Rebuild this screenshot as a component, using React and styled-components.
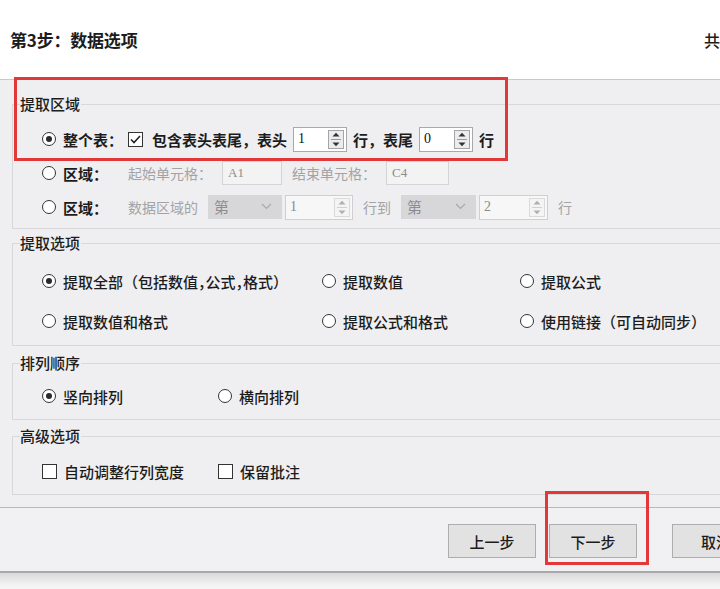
import React from "react";
import styled, { createGlobalStyle } from "styled-components";

const GlobalStyle = createGlobalStyle`
  html, body {
    margin: 0;
    padding: 0;
    background: #fff;
  }
  body {
    font-family: "Noto Sans CJK SC", "Noto Sans", sans-serif;
    font-weight: 500;
    color: #1c1c1c;
  }
`;

const Viewport = styled.div`
  position: relative;
  width: 720px;
  height: 589px;
  overflow: hidden;
  background: #f6f6f6;
`;

const Dialog = styled.div`
  width: 780px;
`;

const Header = styled.div`
  height: 79px;
  background: #fff;
  border-bottom: 1px solid #c9c9cb;
  display: flex;
  align-items: center;
  justify-content: space-between;
  padding: 0 35px 0 10px;
`;

const Title = styled.div`
  font-size: 17px;
  font-weight: 700;
  letter-spacing: -0.2px;
`;

const StepCount = styled.div`
  font-size: 16px;
`;

const Body = styled.div`
  background: #efeff1;
  padding: 14px 12px 12px 12px;
`;

const Group = styled.fieldset`
  margin: ${(p) => p.$mt || 0}px 0 0 0;
  padding: ${(p) => p.$pt}px 0 ${(p) => p.$pb}px 7px;
  border: 1px solid #d8d8da;
  min-width: 0;
`;

const Legend = styled.legend`
  padding: 0 1px 0 0;
  margin: 0;
  font-size: 15px;
  line-height: 20px;
  color: #1c1c1c;
`;

const Content = styled.div`
  padding-left: 22px;
`;

const Row = styled.div`
  height: ${(p) => p.$h || 34}px;
  display: flex;
  align-items: center;
  gap: ${(p) => p.$gap ?? 10}px;
  white-space: nowrap;
`;

const Lead = styled.div`
  display: flex;
  align-items: center;
  gap: 7px;
`;

const LeadLabel = styled.span`
  width: ${(p) => p.$w}px;
  font-size: 15px;
  font-weight: 700;
`;

const Text = styled.span`
  font-size: ${(p) => (p.$muted ? 14 : 15)}px;
  font-weight: ${(p) => (p.$bold ? 700 : 400)};
  color: ${(p) => (p.$muted ? "#a3a3a5" : "#1c1c1c")};
`;

const Punct = styled.span`
  font-feature-settings: "halt";
`;

const Radio = styled.span`
  width: 14px;
  height: 14px;
  box-sizing: border-box;
  border-radius: 50%;
  border: 1.5px solid #333;
  background: #fff;
  display: inline-flex;
  align-items: center;
  justify-content: center;
  flex: none;
  &::after {
    content: "";
    width: 6px;
    height: 6px;
    border-radius: 50%;
    background: #2a2a2a;
    display: ${(p) => (p.$on ? "block" : "none")};
  }
`;

const Box = styled.span`
  width: 15px;
  height: 15px;
  box-sizing: border-box;
  border: 1.5px solid #333;
  background: #fff;
  display: inline-flex;
  align-items: center;
  justify-content: center;
  flex: none;
  margin-right: ${(p) => p.$mr || 0}px;
`;

const Choice = styled.div`
  display: flex;
  align-items: center;
  gap: 7px;
  font-size: 15px;
`;

const Grid = styled.div`
  display: grid;
  grid-template-columns: ${(p) => p.$cols};
  grid-auto-rows: ${(p) => p.$h}px;
  align-items: center;
  white-space: nowrap;
`;

const Spin = styled.div`
  width: ${(p) => p.$w}px;
  height: 25px;
  box-sizing: border-box;
  border: 1px solid ${(p) => (p.$off ? "#cfcfd1" : "#a9a9ab")};
  background: ${(p) => (p.$off ? "#f7f7f8" : "#fff")};
  display: flex;
  align-items: center;
  justify-content: space-between;
  padding: 2px 2px 2px 4px;
  font-family: "Liberation Serif", serif;
  font-weight: 400;
  font-size: 14px;
  color: ${(p) => (p.$off ? "#8a8a8a" : "#111")};
`;

const SpinBtn = styled.span`
  width: 16px;
  height: 19px;
  box-sizing: border-box;
  border: 1px solid ${(p) => (p.$off ? "#dadadc" : "#a4a4a6")};
  background: ${(p) => (p.$off ? "#f4f4f5" : "#ececee")};
  display: flex;
  flex-direction: column;
  align-items: center;
  justify-content: space-around;
`;

const SpinRule = styled.span`
  width: 10px;
  height: 1px;
  background: ${(p) => (p.$off ? "#d0d0d0" : "#999")};
`;

const Field = styled.div`
  width: ${(p) => p.$w}px;
  height: 24px;
  box-sizing: border-box;
  border: 1px solid #d4d4d6;
  background: #f3f3f4;
  display: flex;
  align-items: center;
  padding-left: 5px;
  font-family: "Liberation Serif", serif;
  font-weight: 400;
  font-size: 13px;
  color: #8d8d8d;
`;

const Select = styled.div`
  width: ${(p) => p.$w}px;
  height: 24px;
  box-sizing: border-box;
  background: #d7d7d9;
  display: flex;
  align-items: center;
  justify-content: space-between;
  padding: 0 10px 0 6px;
  font-size: 15px;
  font-weight: 400;
  color: #8d8d8f;
`;

const Combo = styled.div`
  display: flex;
  gap: 3px;
`;

const Footer = styled.div`
  border-top: 1px solid #b9b9bb;
  background: #f1f1f3;
  height: 66px;
  display: flex;
  align-items: flex-start;
  justify-content: flex-end;
  padding: 16px 20px 0 0;
  box-sizing: border-box;
  gap: 13px;
  border-bottom: 2px solid #a9a9ab;
`;

const Button = styled.div`
  width: 88px;
  height: 34px;
  box-sizing: border-box;
  border: 1px solid #adadad;
  background: #e2e2e3;
  display: flex;
  align-items: center;
  justify-content: center;
  font-size: 15px;
  margin-left: ${(p) => p.$ml || 0}px;
`;

const Shade = styled.div`
  height: 20px;
  background: linear-gradient(#d9d9db, #f3f3f4 60%, #f8f8f8);
`;

const Mark = styled.div`
  position: absolute;
  left: ${(p) => p.$x}px;
  top: ${(p) => p.$y}px;
  width: ${(p) => p.$w}px;
  height: ${(p) => p.$h}px;
  box-sizing: border-box;
  border: 3px solid #e2383a;
  pointer-events: none;
`;

const Arrows = ({ off }) => {
  const c = off ? "#b0b0b0" : "#333";
  return (
    <SpinBtn $off={off}>
      <svg width="8" height="5" viewBox="0 0 8 5">
        <path d="M0.5 4.5 L4 0.8 L7.5 4.5 Z" fill={c} />
      </svg>
      <SpinRule $off={off} />
      <svg width="8" height="5" viewBox="0 0 8 5">
        <path d="M0.5 0.5 L4 4.2 L7.5 0.5 Z" fill={c} />
      </svg>
    </SpinBtn>
  );
};

const Chevron = () => (
  <svg width="11" height="7" viewBox="0 0 11 7">
    <path d="M1 1 L5.5 5.5 L10 1" fill="none" stroke="#a9a9ab" strokeWidth="1.2" />
  </svg>
);

const Check = () => (
  <svg width="11" height="9" viewBox="0 0 11 9">
    <path d="M1 4.5 L4 7.5 L10 1" fill="none" stroke="#222" strokeWidth="1.6" />
  </svg>
);

const SpinInput = ({ w, value, off }) => (
  <Spin $w={w} $off={off}>
    <span>{value}</span>
    <Arrows off={off} />
  </Spin>
);

export default function App() {
  return (
    <Viewport>
      <GlobalStyle />
      <Dialog>
        <Header>
          <Title>第3步：数据选项</Title>
          <StepCount>共3步</StepCount>
        </Header>

        <Body>
          <Group $pt={8} $pb={4}>
            <Legend>提取区域</Legend>
            <Content>
              <Row $gap={6}>
                <Lead>
                  <Radio $on />
                  <LeadLabel $w={59}>整个表：</LeadLabel>
                </Lead>
                <Box $mr={3}>
                  <Check />
                </Box>
                <Text $bold>包含表头表尾，表头</Text>
                <SpinInput w={54} value="1" />
                <Text $bold>行，表尾</Text>
                <SpinInput w={54} value="0" />
                <Text $bold>行</Text>
              </Row>
              <Row>
                <Lead>
                  <Radio />
                  <LeadLabel $w={55}>区域：</LeadLabel>
                </Lead>
                <Text $muted>起始单元格：</Text>
                <Field $w={60}>A1</Field>
                <Text $muted>结束单元格：</Text>
                <Field $w={63}>C4</Field>
              </Row>
              <Row>
                <Lead>
                  <Radio />
                  <LeadLabel $w={55}>区域：</LeadLabel>
                </Lead>
                <Text $muted>数据区域的</Text>
                <Combo>
                  <Select $w={74}>
                    第<Chevron />
                  </Select>
                  <SpinInput w={68} value="1" off />
                </Combo>
                <Text $muted>行到</Text>
                <Combo>
                  <Select $w={75}>
                    第<Chevron />
                  </Select>
                  <SpinInput w={69} value="2" off />
                </Combo>
                <Text $muted>行</Text>
              </Row>
            </Content>
          </Group>

          <Group $mt={4} $pt={8} $pb={4}>
            <Legend>提取选项</Legend>
            <Content>
              <Grid $cols="280px 198px auto" $h={40}>
                <Choice>
                  <Radio $on />
                  <span>
                    提取全部（包括数值<Punct>，</Punct>公式<Punct>，</Punct>格式）
                  </span>
                </Choice>
                <Choice>
                  <Radio />
                  提取数值
                </Choice>
                <Choice>
                  <Radio />
                  提取公式
                </Choice>
                <Choice>
                  <Radio />
                  提取数值和格式
                </Choice>
                <Choice>
                  <Radio />
                  提取公式和格式
                </Choice>
                <Choice>
                  <Radio />
                  使用链接（可自动同步）
                </Choice>
              </Grid>
            </Content>
          </Group>

          <Group $mt={7} $pt={6} $pb={6}>
            <Legend>排列顺序</Legend>
            <Content>
              <Grid $cols="176px auto" $h={34}>
                <Choice>
                  <Radio $on />
                  竖向排列
                </Choice>
                <Choice>
                  <Radio />
                  横向排列
                </Choice>
              </Grid>
            </Content>
          </Group>

          <Group $mt={6} $pt={8} $pb={6}>
            <Legend>高级选项</Legend>
            <Content>
              <Grid $cols="176px auto" $h={34}>
                <Choice>
                  <Box />
                  自动调整行列宽度
                </Choice>
                <Choice>
                  <Box />
                  保留批注
                </Choice>
              </Grid>
            </Content>
          </Group>
        </Body>

        <Footer>
          <Button>上一步</Button>
          <Button>下一步</Button>
          <Button $ml={22}>取消</Button>
        </Footer>
        <Shade />
      </Dialog>

      <Mark $x={14} $y={77} $w={494} $h={84} />
      <Mark $x={545} $y={491} $w={104} $h={74} />
    </Viewport>
  );
}
